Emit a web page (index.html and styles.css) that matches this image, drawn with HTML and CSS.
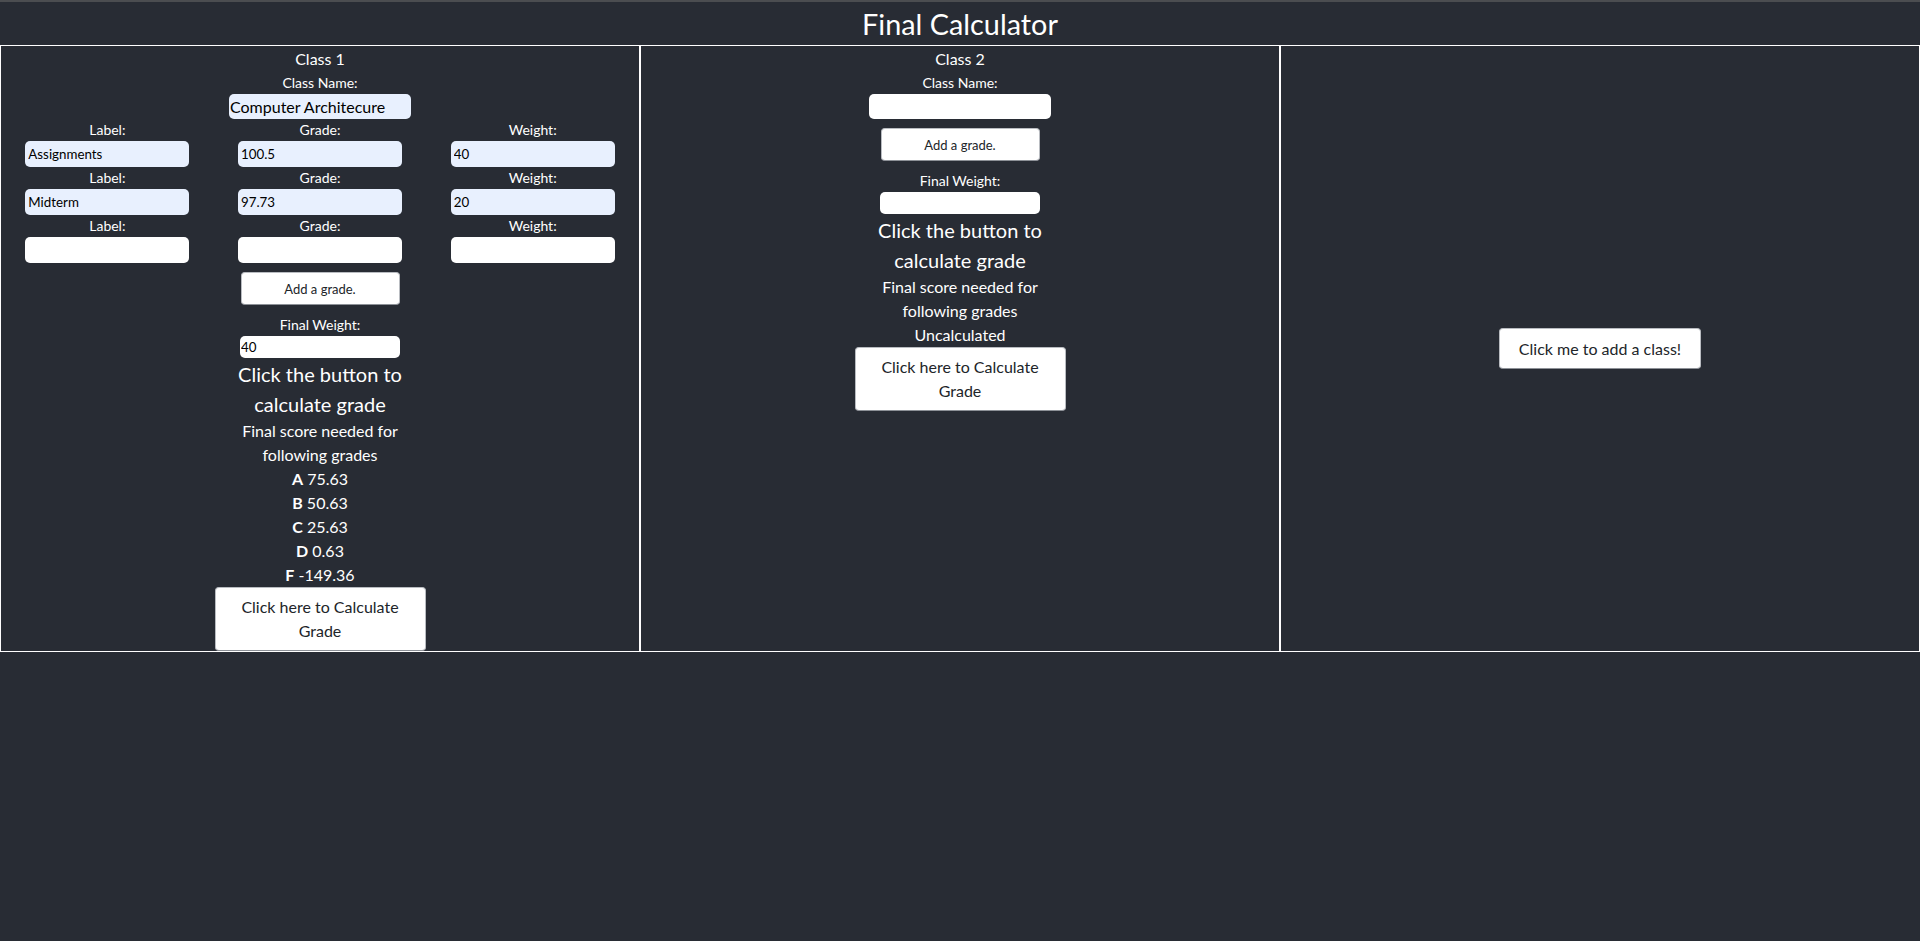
FILE: index.html
```html
<!DOCTYPE html>
<html lang="en">
<head>
<meta charset="utf-8">
<title>Final Calculator</title>
<link rel="stylesheet" href="styles.css">
</head>
<body>
<header class="app-header">Final Calculator</header>
<main class="classes">
  <section class="class-card">
    <div class="class-title">Class 1</div>
    <label class="field-label">Class Name:</label>
    <input class="class-name filled" type="text" value="Computer Architecure">
    <div class="grade-grid">
      <div class="grade-cell"><label class="field-label">Label:</label><input class="grade-input filled" type="text" value="Assignments"></div>
      <div class="grade-cell"><label class="field-label">Grade:</label><input class="grade-input filled" type="text" value="100.5"></div>
      <div class="grade-cell"><label class="field-label">Weight:</label><input class="grade-input filled" type="text" value="40"></div>
      <div class="grade-cell"><label class="field-label">Label:</label><input class="grade-input filled" type="text" value="Midterm"></div>
      <div class="grade-cell"><label class="field-label">Grade:</label><input class="grade-input filled" type="text" value="97.73"></div>
      <div class="grade-cell"><label class="field-label">Weight:</label><input class="grade-input filled" type="text" value="20"></div>
      <div class="grade-cell"><label class="field-label">Label:</label><input class="grade-input" type="text" value=""></div>
      <div class="grade-cell"><label class="field-label">Grade:</label><input class="grade-input" type="text" value=""></div>
      <div class="grade-cell"><label class="field-label">Weight:</label><input class="grade-input" type="text" value=""></div>
    </div>
    <div class="summary">
      <button class="add-grade" type="button">Add a grade.</button>
      <label class="field-label final-label">Final Weight:</label>
      <input class="final-weight" type="text" value="40">
      <p class="prompt">Click the button to calculate grade</p>
      <p class="needed">Final score needed for following grades</p>
      <p class="needed"><b>A</b> 75.63</p>
      <p class="needed"><b>B</b> 50.63</p>
      <p class="needed"><b>C</b> 25.63</p>
      <p class="needed"><b>D</b> 0.63</p>
      <p class="needed"><b>F</b> -149.36</p>
      <button class="calc-btn" type="button">Click here to Calculate Grade</button>
    </div>
  </section>
  <section class="class-card">
    <div class="class-title">Class 2</div>
    <label class="field-label">Class Name:</label>
    <input class="class-name" type="text" value="">
    <div class="summary">
      <button class="add-grade" type="button">Add a grade.</button>
      <label class="field-label final-label">Final Weight:</label>
      <input class="final-weight" type="text" value="">
      <p class="prompt">Click the button to calculate grade</p>
      <p class="needed">Final score needed for following grades</p>
      <p class="needed">Uncalculated</p>
      <button class="calc-btn" type="button">Click here to Calculate Grade</button>
    </div>
  </section>
  <section class="class-card add-card">
    <button class="add-class" type="button">Click me to add a class!</button>
  </section>
</main>
</body>
</html>
```
FILE: styles.css
```css
html, body {
  margin: 0;
  padding: 0;
}

body {
  background: #282c34;
  color: #ffffff;
  font-family: Lato, "Noto Sans", sans-serif;
  font-size: 16px;
  border-top: 2px solid #4b4d50;
  min-height: 939px;
}

.app-header {
  height: 43px;
  padding-top: 2px;
  box-sizing: border-box;
  line-height: 41px;
  text-align: center;
  font-size: 28.8px;
  color: #ffffff;
}

.classes {
  display: grid;
  grid-template-columns: repeat(3, 1fr);
}

.class-card {
  border: 1px solid #ffffff;
  display: flex;
  flex-direction: column;
  align-items: center;
  min-width: 0;
}

.class-title {
  font-size: 16px;
  line-height: 26px;
}

.field-label {
  display: block;
  font-size: 14px;
  line-height: 22px;
  text-align: center;
}

input {
  font-family: inherit;
  border: none;
  border-radius: 5px;
  background: #ffffff;
  color: #000000;
  outline: none;
  box-sizing: border-box;
  margin: 0;
}

input.filled {
  background: #e8f0fe;
}

.class-name {
  width: 182px;
  height: 25px;
  font-size: 16px;
  padding: 0 1px;
}

.grade-grid {
  width: 100%;
  display: grid;
  grid-template-columns: repeat(3, 1fr);
}

.grade-cell {
  display: flex;
  flex-direction: column;
  align-items: center;
}

.grade-input {
  width: 164px;
  height: 26px;
  font-size: 13.33px;
  padding: 0 3px;
}

.summary {
  width: 213px;
  display: flex;
  flex-direction: column;
  align-items: center;
  text-align: center;
}

button {
  font-family: inherit;
  background: #ffffff;
  color: #212529;
  border: 1px solid #b9bcc1;
  border-bottom-color: #8d9197;
  border-radius: 4px;
  cursor: pointer;
  margin: 0;
  box-sizing: border-box;
}

.add-grade {
  margin-top: 9px;
  width: 159px;
  height: 33px;
  font-size: 13px;
  padding: 0;
}

.final-label {
  margin-top: 9px;
}

.final-weight {
  width: 160px;
  height: 22px;
  font-size: 13.33px;
  padding: 0 1px;
}

.prompt {
  margin: 1px 0 0;
  font-size: 20px;
  line-height: 30px;
}

.needed {
  margin: 0;
  font-size: 16px;
  line-height: 24px;
}

.calc-btn {
  width: 211px;
  font-size: 16px;
  line-height: 24px;
  padding: 7px 12px;
}

.add-card {
  justify-content: center;
}

.add-class {
  width: 202px;
  font-size: 16px;
  line-height: 24px;
  padding: 7.5px 12px;
}
```
